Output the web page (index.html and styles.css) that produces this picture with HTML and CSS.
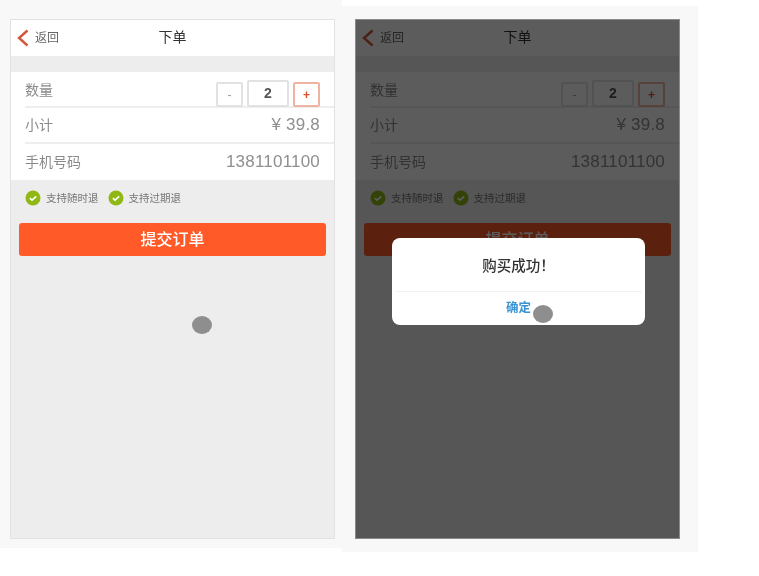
FILE: index.html
```html
<!DOCTYPE html>
<html lang="zh-CN">
<head>
    <meta charset="UTF-8">
    <title>下单</title>
    <link rel="stylesheet" href="styles.css">
</head>
<body>
    <div class="board">
        <div class="panel panel-left">
            <div class="phone">
                <header class="topbar">
                    <a class="back" href="#">
                        <svg class="back-icon" viewBox="0 0 12 18"><path d="M10.5 1.5 2 9l8.500 7.500"/></svg>
                        返回
                    </a>
                    <h1 class="title">下单</h1>
                </header>
                <div class="rows">
                    <div class="row row-qty">
                        <span class="label">数量</span>
                        <div class="stepper">
                            <button class="step">-</button>
                            <div class="qty">2</div>
                            <button class="step step-plus">+</button>
                        </div>
                    </div>
                    <div class="row"><span class="label">小计</span><span class="amount">¥ 39.8</span></div>
                    <div class="row"><span class="label">手机号码</span><span class="amount">1381101100</span></div>
                </div>
                <div class="notes">
                    <span class="note">
                        <svg class="check" viewBox="0 0 16 16"><circle cx="8" cy="8" r="7.500"/><path d="M4.800 8.200 7 10.200l4.200-3.800"/></svg>
                        支持随时退
                    </span>
                    <span class="note">
                        <svg class="check" viewBox="0 0 16 16"><circle cx="8" cy="8" r="7.500"/><path d="M4.800 8.200 7 10.200l4.200-3.800"/></svg>
                        支持过期退
                    </span>
                </div>
                <button class="submit">提交订单</button>
                <div class="touch touch-left"></div>
            </div>
        </div>

        <div class="panel panel-right">
            <div class="phone phone-dim">
                <header class="topbar">
                    <a class="back" href="#">
                        <svg class="back-icon" viewBox="0 0 12 18"><path d="M10.5 1.5 2 9l8.500 7.500"/></svg>
                        返回
                    </a>
                    <h1 class="title">下单</h1>
                </header>
                <div class="rows">
                    <div class="row row-qty">
                        <span class="label">数量</span>
                        <div class="stepper">
                            <button class="step">-</button>
                            <div class="qty">2</div>
                            <button class="step step-plus">+</button>
                        </div>
                    </div>
                    <div class="row"><span class="label">小计</span><span class="amount">¥ 39.8</span></div>
                    <div class="row"><span class="label">手机号码</span><span class="amount">1381101100</span></div>
                </div>
                <div class="notes">
                    <span class="note">
                        <svg class="check" viewBox="0 0 16 16"><circle cx="8" cy="8" r="7.500"/><path d="M4.800 8.200 7 10.200l4.200-3.800"/></svg>
                        支持随时退
                    </span>
                    <span class="note">
                        <svg class="check" viewBox="0 0 16 16"><circle cx="8" cy="8" r="7.500"/><path d="M4.800 8.200 7 10.200l4.200-3.800"/></svg>
                        支持过期退
                    </span>
                </div>
                <button class="submit">提交订单</button>
                <div class="mask"></div>
                <div class="dialog">
                    <div class="dialog-text">购买成功！</div>
                    <div class="dialog-btn">确定</div>
                </div>
                <div class="touch touch-right"></div>
            </div>
        </div>
    </div>
</body>
</html>
```

FILE: styles.css
```css
body {
    margin: 0;
    padding: 0;
    background-color: #fff;
    font-family: "Liberation Sans", "Noto Sans CJK SC", sans-serif;
}

.board {
    display: flex;
    align-items: flex-start;
    filter: blur(0.4px);
}

.panel {
    box-sizing: border-box;
    background-color: #f8f8f8;
}

.panel-left {
    width: 342px;
    height: 548px;
    padding: 20px 0 0 11px;
}

.panel-right {
    width: 356px;
    height: 546px;
    margin-top: 6px;
    padding: 14px 0 0 14px;
}

.phone {
    position: relative;
    width: 323px;
    height: 518px;
    background-color: #ededed;
    box-shadow: 0 0 0 1px #e2e2e2;
}

.phone-dim {
    box-shadow: 0 0 0 1px #8a8a8a;
}

.topbar {
    position: relative;
    height: 36px;
    display: flex;
    align-items: center;
    justify-content: center;
    background-color: #fff;
}

.back {
    position: absolute;
    left: 6px;
    top: 9px;
    display: flex;
    align-items: center;
    gap: 6px;
    color: #666;
    font-size: 12px;
    line-height: 14px;
    text-decoration: none;
}

.back-icon {
    width: 12px;
    height: 18px;
    fill: none;
    stroke: #d2573a;
    stroke-width: 2.4;
}

.title {
    margin: 0 0 4px;
    color: #333;
    font-size: 14px;
    font-weight: normal;
}

.rows {
    margin-top: 16px;
    padding-left: 14px;
    background-color: #fff;
}

.row {
    box-sizing: border-box;
    height: 36px;
    padding-right: 14px;
    display: flex;
    align-items: center;
    justify-content: space-between;
    border-bottom: 2px solid #eee;
    color: #8a8a8a;
    font-size: 14px;
}

.row:last-child {
    border-bottom: none;
}

.label {
    margin-bottom: 3px;
}

.row-qty {
    align-items: flex-end;
}

.row-qty .label {
    align-self: center;
    margin-bottom: 0;
}

.amount {
    font-size: 17px;
    letter-spacing: 0.2px;
    color: #8f8f8f;
}

.stepper {
    display: flex;
    align-items: flex-end;
    gap: 4px;
    margin-bottom: -1px;
}

.step {
    box-sizing: border-box;
    width: 27px;
    height: 25px;
    padding: 0;
    background-color: #fff;
    border: 2px solid #e2e2e2;
    border-radius: 2px;
    color: #999;
    font-family: inherit;
    font-size: 12px;
}

.step-plus {
    border-color: #eeb3a3;
    color: #d9502e;
    font-weight: bold;
}

.qty {
    box-sizing: border-box;
    width: 42px;
    height: 27px;
    line-height: 23px;
    background-color: #fff;
    border: 2px solid #e2e2e2;
    border-radius: 2px;
    color: #555;
    font-size: 14px;
    font-weight: bold;
    text-align: center;
}

.notes {
    box-sizing: border-box;
    height: 43px;
    padding: 0 0 8px 14px;
    display: flex;
    align-items: center;
    gap: 9px;
}

.note {
    display: flex;
    align-items: center;
    gap: 5px;
    color: #777;
    font-size: 10.5px;
    line-height: 14px;
}

.check {
    width: 16px;
    height: 16px;
}

.check circle {
    fill: #8fb814;
}

.check path {
    fill: none;
    stroke: #fff;
    stroke-width: 1.6;
}

.submit {
    display: block;
    width: 307px;
    height: 33px;
    margin-left: 8px;
    padding: 0 0 4px;
    background-color: #ff5a28;
    border: none;
    border-radius: 3px;
    color: #fff;
    font-family: inherit;
    font-size: 16px;
    font-weight: 500;
}

.mask {
    position: absolute;
    inset: 0;
    background-color: rgba(0, 0, 0, 0.64);
}

.dialog {
    position: absolute;
    left: 36px;
    top: 218px;
    width: 253px;
    height: 87px;
    background-color: #fff;
    border-radius: 8px;
    text-align: center;
}

.dialog-text {
    height: 53px;
    line-height: 56px;
    margin: 0 3px;
    border-bottom: 1px solid #f3f3f3;
    color: #333;
    font-size: 14.5px;
    font-weight: 500;
}

.dialog-btn {
    line-height: 32px;
    color: #3a94d4;
    font-size: 12.5px;
    font-weight: bold;
}

.touch {
    position: absolute;
    width: 20px;
    height: 18px;
    background-color: #8e8e8e;
    border-radius: 50%;
}

.touch-left {
    left: 181px;
    top: 296px;
}

.touch-right {
    left: 177px;
    top: 285px;
}
```
